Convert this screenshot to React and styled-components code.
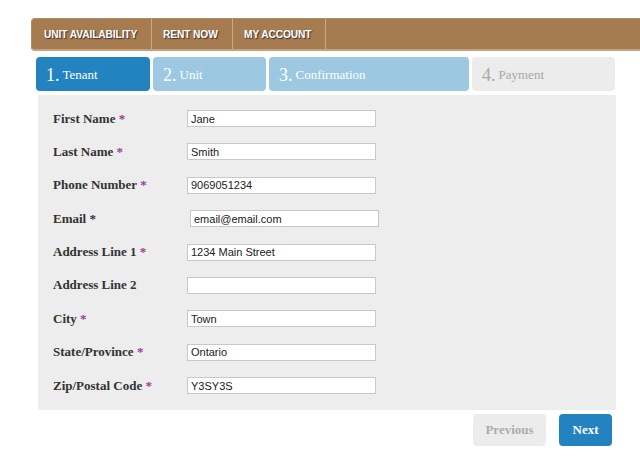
import React from "react";
import styled, { createGlobalStyle } from "styled-components";

const Global = createGlobalStyle`
  html, body { margin: 0; padding: 0; background: #fff; }
  body { font-family: "Liberation Serif", "Times New Roman", serif; }
`;

const Page = styled.div`
  width: 640px;
  height: 464px;
  overflow: hidden;
  padding-top: 18px;
  box-sizing: border-box;
`;

const NavBar = styled.nav`
  margin-left: 31px;
  width: 620px;
  height: 33px;
  box-sizing: border-box;
  display: flex;
  background: #a67b50;
  border: 1px solid #b48c64;
  border-bottom: 2px solid #c4a282;
  border-radius: 4px 0 0 4px;
`;

const NavItem = styled.a`
  display: flex;
  align-items: center;
  padding: 0 0 0 ${p => p.$first ? 12 : 11}px;
  width: ${p => p.$w}px;
  box-sizing: border-box;
  border-right: 1px solid #c9a886;
  font-family: "Liberation Sans", Arial, sans-serif;
  font-weight: bold;
  font-size: 10.2px;
  letter-spacing: -0.1px;
  color: #fff;
  text-shadow: 1px 1px 1px #333;
  text-decoration: none;
  white-space: nowrap;
`;

const Tabs = styled.div`
  display: flex;
  gap: 3px;
  margin: 6px 0 0 36px;
`;

const Tab = styled.div`
  width: ${p => p.$w}px;
  height: 34px;
  box-sizing: border-box;
  border-radius: 4px;
  display: flex;
  align-items: center;
  padding: 2px 0 0 10px;
  background: ${p => p.$state === "active" ? "#2283c0" : p.$state === "done" ? "#9dc8e1" : "#ececec"};
  color: ${p => p.$state === "todo" ? "#a8a8a8" : "#fff"};
  font-family: "Liberation Serif", "Times New Roman", serif;
`;

const TabNum = styled.span`
  font-size: 18px;
  margin-right: 3px;
`;

const TabLabel = styled.span`
  font-size: 13px;
`;

const Panel = styled.form`
  margin: 4px 0 0 38px;
  width: 578px;
  box-sizing: border-box;
  background: #ededed;
  padding: 15px 0 16px 15px;
  display: grid;
  grid-template-columns: 134px 1fr;
  row-gap: 16.4px;
  align-items: center;
`;

const Label = styled.label`
  font-family: "Liberation Serif", "Times New Roman", serif;
  font-weight: bold;
  font-size: 13px;
  color: #333;
  line-height: 15px;
  margin-top: -1px;
  white-space: nowrap;
`;

const Star = styled.span`
  color: ${p => p.$plain ? "#333" : "#9b3a96"};
`;

const Input = styled.input`
  width: 189px;
  height: 17px;
  box-sizing: border-box;
  margin: 0 0 0 ${p => p.$shift || 0}px;
  padding: 0 3px;
  border: 1px solid #c8c8c8;
  background: #fff;
  font-family: "Liberation Sans", Arial, sans-serif;
  font-size: 11px;
  color: #222;
  outline: none;
`;

const Actions = styled.div`
  display: flex;
  justify-content: flex-end;
  gap: 13px;
  width: 612px;
  margin-top: 4px;
`;

const Button = styled.button`
  height: 32px;
  width: ${p => p.$w}px;
  border: none;
  border-radius: 4px;
  font-family: "Liberation Serif", "Times New Roman", serif;
  font-weight: bold;
  font-size: 13px;
  background: ${p => p.$primary ? "#2283c0" : "#ececec"};
  color: ${p => p.$primary ? "#fff" : "#acacac"};
  padding: 0;
`;

const fields = [
  { label: "First Name", value: "Jane", req: true },
  { label: "Last Name", value: "Smith", req: true },
  { label: "Phone Number", value: "9069051234", req: true },
  { label: "Email", value: "email@email.com", req: true, plain: true, shift: 3 },
  { label: "Address Line 1", value: "1234 Main Street", req: true },
  { label: "Address Line 2", value: "" },
  { label: "City", value: "Town", req: true },
  { label: "State/Province", value: "Ontario", req: true },
  { label: "Zip/Postal Code", value: "Y3SY3S", req: true },
];

export default function App() {
  return (
    <Page>
      <Global />
      <NavBar>
        <NavItem $first $w={120}>UNIT AVAILABILITY</NavItem>
        <NavItem $w={81}>RENT NOW</NavItem>
        <NavItem $w={93}>MY ACCOUNT</NavItem>
      </NavBar>
      <Tabs>
        <Tab $w={114} $state="active"><TabNum>1.</TabNum><TabLabel>Tenant</TabLabel></Tab>
        <Tab $w={113} $state="done"><TabNum>2.</TabNum><TabLabel>Unit</TabLabel></Tab>
        <Tab $w={200} $state="done"><TabNum>3.</TabNum><TabLabel>Confirmation</TabLabel></Tab>
        <Tab $w={143} $state="todo"><TabNum>4.</TabNum><TabLabel>Payment</TabLabel></Tab>
      </Tabs>
      <Panel onSubmit={e => e.preventDefault()}>
        {fields.map(f => (
          <React.Fragment key={f.label}>
            <Label>
              {f.label}
              {f.req && <Star $plain={f.plain}> *</Star>}
            </Label>
            <Input defaultValue={f.value} $shift={f.shift} />
          </React.Fragment>
        ))}
      </Panel>
      <Actions>
        <Button $w={73}>Previous</Button>
        <Button $w={53} $primary>Next</Button>
      </Actions>
    </Page>
  );
}
